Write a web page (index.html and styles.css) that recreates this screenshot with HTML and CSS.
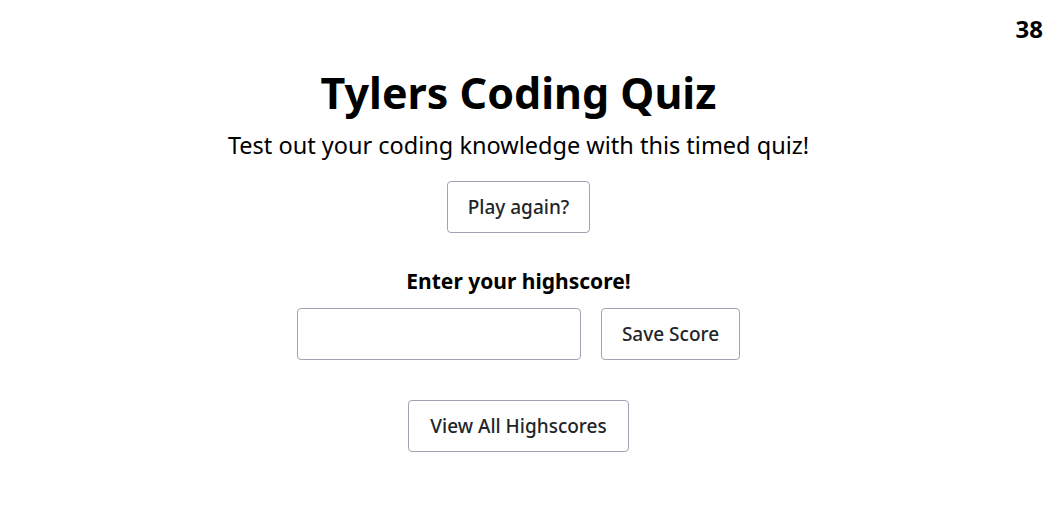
FILE: index.html
```html
<!DOCTYPE html>
<html>
<head>
<meta charset="utf-8">
<link rel="stylesheet" href="styles.css">
</head>
<body>
<div class="timer">38</div>
<main class="quiz">
  <h1 class="title">Tylers Coding Quiz</h1>
  <p class="subtitle">Test out your coding knowledge with this timed quiz!</p>
  <button class="btn play">Play again?</button>
  <h2 class="label">Enter your highscore!</h2>
  <div class="score-row">
    <input class="score-input" type="text">
    <button class="btn">Save Score</button>
  </div>
  <button class="btn view">View All Highscores</button>
</main>
</body>
</html>
```
FILE: styles.css
```css
body {
  margin: 0;
  font-family: "Noto Sans", "Open Sans", sans-serif;
  color: #000;
  background: #fff;
}
.timer {
  text-align: right;
  font-weight: bold;
  font-size: 24px;
  line-height: 30px;
  padding: 14px 14px 0 0;
  height: 46px;
  box-sizing: border-box;
}
.quiz {
  display: flex;
  flex-direction: column;
  align-items: center;
  padding-right: 20px;
}
.title {
  font-size: 43px;
  font-weight: bold;
  margin: 20px 0 0;
  line-height: 54px;
}
.subtitle {
  font-size: 23.5px;
  margin: 8px 0 0;
  line-height: 34px;
}
.btn {
  font-family: inherit;
  font-size: 19px;
  font-weight: 500;
  color: #212529;
  background: #fff;
  border: 1px solid #a3a3b3;
  border-radius: 4px;
  height: 52px;
  padding: 0 20px;
}
.play {
  margin-top: 19px;
}
.label {
  font-size: 21px;
  font-weight: bold;
  margin: 34px 0 0;
  line-height: 28px;
}
.score-row {
  display: flex;
  gap: 20px;
  margin-top: 13px;
}
.score-input {
  width: 284px;
  height: 52px;
  box-sizing: border-box;
  border: 1px solid #a3a3b3;
  border-radius: 4px;
}
.view {
  margin-top: 40px;
  padding: 0 21px;
}
```
